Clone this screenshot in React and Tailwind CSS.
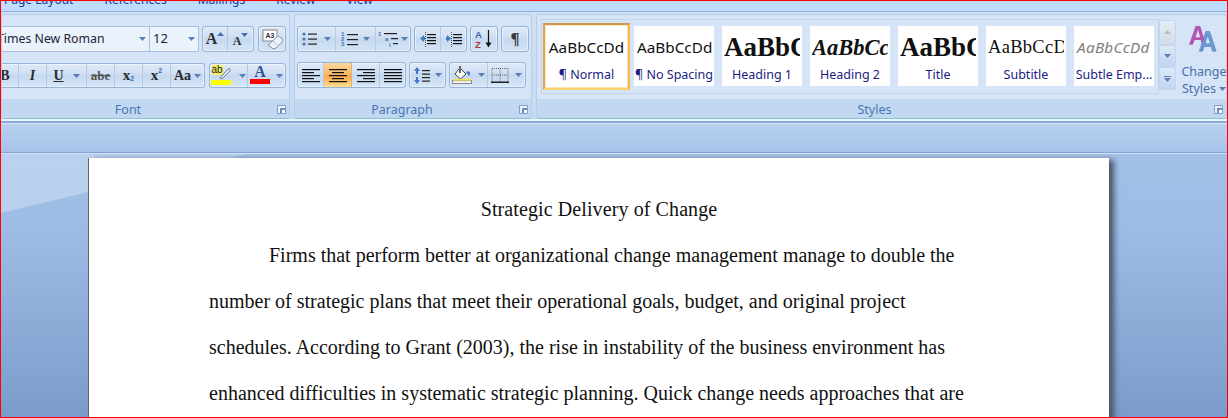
import React from "react";

const UI = "font-['Noto_Sans','Open_Sans',sans-serif]";
const groupBtn = "flex items-center justify-center border-r border-[#b4c9e3] last:border-r-0 h-full";

function Caret({ className = "ml-[5px]" }) {
  return (
    <svg width="7" height="4" viewBox="0 0 7 4" className={className}>
      <path d="M0 0h7L3.5 4z" fill="#5b7fb2" />
    </svg>
  );
}

function Group({ children, className = "" }) {
  return (
    <div className={`flex h-full rounded-[3px] border border-[#96b3d8] bg-[linear-gradient(180deg,#e0eaf7_0%,#cfdff3_42%,#c4d8ef_50%,#d6e5f6_100%)] shadow-[inset_0_0_0_1px_rgba(255,255,255,0.45)] overflow-hidden ${className}`}>
      {children}
    </div>
  );
}

function Launcher() {
  return (
    <svg width="9" height="9" viewBox="0 0 9 9">
      <path d="M.5.5h8v8h-8z" fill="#eef4fb" stroke="#7f9fc8" />
      <path d="M3 3h5v5H3z" fill="#6e8fbd" />
      <path d="M5 5h3v3H5z" fill="#fff" />
    </svg>
  );
}

function GroupPanel({ title, width, children, flexGrow, labelClass = "" }) {
  return (
    <div
      className={`flex flex-col h-[105px] rounded-[3px] border border-[#b7cde8] border-b-[#8cc0d4] bg-[#d5e4f6] overflow-hidden ${width} ${flexGrow ? "flex-1" : ""}`}
    >
      <div className="h-[84px] shrink-0">{children}</div>
      <div className={`relative flex-1 flex items-center justify-center pt-[4px] bg-[#c2d8f0] text-[12.5px] leading-none text-[#4a75b5] ${UI} ${labelClass}`}>
        {title}
        <span className="absolute right-[3px] top-[6px] flex"><Launcher /></span>
      </div>
    </div>
  );
}

function Lines({ align }) {
  const rows = {
    left: [[0, 18], [0, 12], [0, 18], [0, 12], [0, 18]],
    center: [[0, 18], [3, 12], [0, 18], [3, 12], [0, 18]],
    right: [[0, 18], [6, 12], [0, 18], [6, 12], [0, 18]],
    justify: [[0, 18], [0, 18], [0, 18], [0, 18], [0, 18]],
  }[align];
  return (
    <svg width="18" height="15" viewBox="0 0 18 15">
      {rows.map(([x, w], i) => (
        <rect key={i} x={x} y={i * 3 + 1} width={w} height="1.2" fill="#111" />
      ))}
    </svg>
  );
}

const Bullets = () => (
  <svg width="16" height="15" viewBox="0 0 16 15">
    {[2, 7, 12].map((y) => (
      <g key={y}>
        <circle cx="2" cy={y} r="1.6" fill="#4a76b8" />
        <rect x="6" y={y - 0.5} width="9" height="1.2" fill="#222" />
      </g>
    ))}
  </svg>
);

const Numbers = () => (
  <svg width="20" height="16" viewBox="0 0 20 16">
    {["1", "2", "3"].map((n, i) => (
      <g key={n}>
        <text x="0" y={5 + i * 5} fontSize="6" fontWeight="700" fill="#3d6cb0" fontFamily="Liberation Sans">{n}</text>
        <rect x="6" y={3 + i * 5} width="11" height="1.2" fill="#222" />
      </g>
    ))}
  </svg>
);

const Multi = () => (
  <svg width="22" height="17" viewBox="0 0 22 17">
    <text x="0" y="5" fontSize="6" fontWeight="700" fill="#3d6cb0" fontFamily="Liberation Sans">1</text>
    <rect x="6" y="2" width="13" height="1.2" fill="#222" />
    <text x="7" y="10" fontSize="6" fontWeight="700" fill="#3d6cb0" fontFamily="Liberation Sans">a</text>
    <rect x="13" y="7" width="7" height="1.2" fill="#222" />
    <text x="11" y="16" fontSize="6" fontWeight="700" fill="#3d6cb0" fontFamily="Liberation Sans">i</text>
    <rect x="15" y="12" width="5" height="1.2" fill="#222" />
  </svg>
);

const Indent = ({ dir }) => (
  <svg width="16" height="15" viewBox="0 0 16 15">
    <rect x="7" y="2" width="9" height="1.2" fill="#111" />
    <rect x="7" y="5" width="9" height="1.2" fill="#111" />
    <rect x="7" y="8" width="9" height="1.2" fill="#111" />
    <rect x="7" y="11" width="9" height="1.2" fill="#111" />
    <path d="M5.5 0v15" stroke="#555" strokeDasharray="1 1" />
    {dir === "l" ? (
      <path d="M0 6.5 4 3v2h1v3H4v2z" fill="#3f79cc" />
    ) : (
      <path d="M5 6.5 1 3v2H0v3h1v2z" fill="#3f79cc" />
    )}
  </svg>
);

const Sort = () => (
  <div className="relative flex items-center h-[19px] w-[19px]">
    <svg width="19" height="20" viewBox="0 0 19 20">
      <text x="0" y="8.5" fontSize="9.5" fontWeight="700" fill="#3b64ad" fontFamily="Liberation Sans">A</text>
      <text x="0" y="18.5" fontSize="9.5" fontWeight="700" fill="#a33d3d" fontFamily="Liberation Sans">Z</text>
      <path d="M13.5 1v14" stroke="#111" strokeWidth="1.2" />
      <path d="M10.5 13.5h6l-3 5z" fill="#111" />
    </svg>
  </div>
);

const LineSpacing = () => (
  <svg width="16" height="17" viewBox="0 0 16 17">
    <path d="M3 0 6 4H4v3H2V4H0z" fill="#3f79cc" />
    <path d="M3 17 0 13h2v-3h2v3h2z" fill="#3f79cc" />
    {[3, 6.5, 10, 13.5].map((y) => (
      <rect key={y} x="8" y={y} width="8" height="1.2" fill="#222" />
    ))}
  </svg>
);

const Shading = () => (
  <svg width="20" height="18" viewBox="0 0 20 18">
    <path d="M8 2 14 8 8.5 13 3 8z" fill="#fff" stroke="#444" />
    <path d="M7 0h2v7H7z" fill="#666" />
    <path d="M14 6c2-1 4-1 4 1s-.5 3-1 3-1-2-3-4z" fill="#3f79cc" />
    <rect x="0.5" y="14.5" width="19" height="3" fill="#eee" stroke="#8c8c8c" />
    <rect x="1" y="13" width="18" height="1.6" fill="#f3e34a" />
  </svg>
);

const BordersIcon = () => (
  <svg width="18" height="15" viewBox="0 0 18 15">
    <path d="M1 .5h16M1 7h16M1 .5v13M9 .5v13M17 .5v13" stroke="#666" strokeDasharray="1 1" fill="none" />
    <rect x="0" y="13.5" width="18" height="1.4" fill="#111" />
  </svg>
);

const Highlighter = () => (
  <div className="relative w-[19px] h-[19px]">
    <span className="absolute left-0 top-[-1px] w-[11px] h-[10px] bg-[#f6ee5d] text-[10px] leading-[10px] text-[#222] font-['Liberation_Sans']">ab</span>
    <svg width="19" height="19" viewBox="0 0 19 19" className="absolute left-0 top-0">
      <path d="M8 12 16 3c2-1 3 1 2 2l-8 8z" fill="#dfe7f1" stroke="#6f7e93" />
      <path d="M7 14h3l-2 1z" fill="#333" />
    </svg>
    <span className="absolute left-[-1px] top-[14px] w-[20px] h-[5px] bg-[#ffff00]" />
  </div>
);

const FontColor = () => (
  <div className="relative w-[20px] h-[20px] text-center">
    <span className="absolute inset-x-0 top-[-4px] font-['Liberation_Serif'] font-bold text-[16px] leading-[20px] text-[#2f5597]">A</span>
    <span className="absolute left-0 top-[13px] w-[20px] h-[5px] bg-[#ff0000]" />
  </div>
);

const Eraser = () => (
  <svg width="21" height="21" viewBox="0 0 21 21">
    <rect x="1" y="1" width="14" height="11" fill="#fff" stroke="#888" />
    <text x="3.5" y="9" fontSize="7" fontWeight="700" fill="#333" fontFamily="Liberation Sans">A3</text>
    <path d="M6 16 15 8c1-1 2-1 3 0l2 2c1 1 1 2 0 3l-6 6c-1 1-3 1-4 0z" fill="#eef3f8" stroke="#7d8ea6" />
    <path d="M10 11l5 5" stroke="#a9b9cd" />
  </svg>
);

const Grow = ({ big }) => (
  <span className="relative flex items-center justify-center font-['Liberation_Serif'] font-bold text-[#2f2f2f]">
    <span className={big ? "text-[16px] leading-none" : "text-[12px] leading-none mt-[3px]"}>A</span>
    <svg width="7" height="4" viewBox="0 0 7 4" className={big ? "mb-[10px]" : "mb-[9px]"}>
      <path d={big ? "M0 4h7L3.5 0z" : "M0 0h7L3.5 4z"} fill="#3f6eb5" />
    </svg>
  </span>
);

const Tb = ({ className = "", children }) => (
  <span className={`font-['Liberation_Serif'] text-[#2a2a2a] ${className}`}>{children}</span>
);

function StyleItem({ preview, label }) {
  return (
    <div className="flex flex-col items-center w-[80px] h-[60px] bg-white overflow-hidden shrink-0">
      <div className="h-[41px] w-[76px] pt-[2px] flex items-center overflow-hidden whitespace-nowrap">{preview}</div>
      <div className={`text-[12.5px] leading-[16px] text-[#1c1c80] whitespace-nowrap ${UI}`}>{label}</div>
    </div>
  );
}

function Spin({ className, children }) {
  return <div className={`flex items-center justify-center w-[17px] rounded-[2px] border border-[#c3d6ee] ${className}`}>{children}</div>;
}

const ChangeStyles = () => (
  <svg width="30" height="30" viewBox="0 0 32 30">
    <path d="M0 21 7 1h5l6 20h-4l-1.5-5H6l-2 5zM7 13h5L9.5 5z" fill="#b455b0" fillRule="evenodd" />
    <path d="M11 28 18 7h4l7 21h-4l-1.5-5H16l-1.5 5zM17 20h6l-3-9z" fill="#6b9ad8" fillRule="evenodd" stroke="#3f6eb5" strokeWidth="0.5" />
  </svg>
);

const docLines = [
  { t: "Firms that perform better at organizational change management manage to double the", c: "pl-[60px]" },
  { t: "number of strategic plans that meet their operational goals, budget, and original project", c: "" },
  { t: "schedules. According to Grant (2003), the rise in instability of the business environment has", c: "" },
  { t: "enhanced difficulties in systematic strategic planning. Quick change needs approaches that are", c: "" },
];

export default function App() {
  return (
    <div className={`relative w-[1228px] h-[418px] overflow-hidden border border-[#ff0000] flex flex-col bg-[#bfdbff] ${UI}`}>
      {/* tabs */}
      <div className="h-[10px] shrink-0 overflow-hidden bg-[#bfdbff]">
        <div className="flex mt-[-9px] pl-[3px] gap-[31px] text-[12px] leading-[16px] text-[#15428b]">
          <span>Page Layout</span>
          <span>References</span>
          <span>Mailings</span>
          <span>Review</span>
          <span>View</span>
        </div>
      </div>
      <div className="h-px bg-[#8db2e3] shrink-0" />

      {/* ribbon */}
      <div className="flex h-[107px] shrink-0 items-end gap-[4px] bg-[linear-gradient(180deg,#cfe0f6,#c4daf4)]">
        {/* Font */}
        <GroupPanel title="Font" width="w-[289px] shrink-0" labelClass="pr-[35px]">
          <div className="flex flex-col items-end pt-[11px] pr-[3px]">
            <div className="flex h-[26px] items-stretch">
              <div className="flex items-center justify-between w-[150px] border-y border-r border-[#a9c0de] bg-[#eaf2fb] text-[12.3px] text-[#22223a] pr-[3px] overflow-hidden">
                <span className="whitespace-nowrap ml-[-3px]">Times New Roman</span>
                <Caret className="" />
              </div>
              <div className="flex items-center justify-between w-[49px] border-y border-r border-[#a9c0de] bg-[#eaf2fb] text-[13px] text-[#22223a] pl-[3px] pr-[3px]">
                <span>12</span>
                <Caret className="" />
              </div>
              <Group className="w-[52px] ml-[3px]">
                <div className={`${groupBtn} w-[26px]`}><Grow big /></div>
                <div className={`${groupBtn} w-[26px]`}><Grow /></div>
              </Group>
              <Group className="w-[28px] ml-[4px]">
                <div className={`${groupBtn} w-full`}><Eraser /></div>
              </Group>
            </div>
            <div className="flex h-[25px] mt-[11px] items-stretch">
              <Group className="rounded-l-none border-l-0">
                <div className={`${groupBtn} w-[19px]`}><Tb className="font-bold text-[14px] ml-[-8px]">B</Tb></div>
                <div className={`${groupBtn} w-[28px]`}><Tb className="italic font-bold text-[14px]">I</Tb></div>
                <div className={`${groupBtn} w-[40px]`}><Tb className="font-bold underline text-[14px]">U</Tb><Caret className="ml-[9px]" /></div>
                <div className={`${groupBtn} w-[28px]`}><Tb className="font-bold line-through text-[13px] text-[#555]">abe</Tb></div>
                <div className={`${groupBtn} w-[28px]`}><Tb className="font-bold text-[15px] leading-none">x</Tb><span className="text-[7px] font-bold text-[#3f6eb5] mt-[8px] font-['Liberation_Sans']">2</span></div>
                <div className={`${groupBtn} w-[28px]`}><Tb className="font-bold text-[15px] leading-none">x</Tb><span className="text-[7px] font-bold text-[#3f6eb5] mb-[8px] font-['Liberation_Sans']">2</span></div>
                <div className={`${groupBtn} w-[33px]`}><Tb className="font-bold text-[14px]">Aa</Tb><Caret className="ml-[3px]" /></div>
              </Group>
              <Group className="ml-[4px]">
                <div className={`${groupBtn} w-[38px]`}><Highlighter /><Caret className="ml-[8px]" /></div>
                <div className={`${groupBtn} w-[37px]`}><FontColor /><Caret className="ml-[6px]" /></div>
              </Group>
            </div>
          </div>
        </GroupPanel>

        {/* Paragraph */}
        <GroupPanel title="Paragraph" width="w-[238px] shrink-0" labelClass="pr-[22px]">
          <div className="flex flex-col pt-[11px] pl-[2px] gap-[10px]">
            <div className="flex h-[26px] gap-[3px]">
              <Group>
                <div className={`${groupBtn} w-[38px]`}><Bullets /><Caret className="ml-[6px]" /></div>
                <div className={`${groupBtn} w-[40px]`}><Numbers /><Caret className="ml-[2px]" /></div>
                <div className={`${groupBtn} w-[34px]`}><Multi /><Caret className="ml-[1px]" /></div>
              </Group>
              <Group>
                <div className={`${groupBtn} w-[26px]`}><Indent dir="l" /></div>
                <div className={`${groupBtn} w-[25px]`}><Indent dir="r" /></div>
              </Group>
              <Group>
                <div className={`${groupBtn} w-[26px]`}><Sort /></div>
              </Group>
              <Group>
                <div className={`${groupBtn} w-[26px]`}><Tb className="font-bold text-[17px] text-[#3a3a3a]">¶</Tb></div>
              </Group>
            </div>
            <div className="flex h-[26px] gap-[3px]">
              <Group>
                <div className={`${groupBtn} w-[26px]`}><Lines align="left" /></div>
                <div className={`${groupBtn} w-[28px] border-r-[#d8b36c] bg-[linear-gradient(180deg,#fbd9a0_0%,#fbb764_45%,#fda94a_55%,#fde08e_100%)]`}><Lines align="center" /></div>
                <div className={`${groupBtn} w-[28px]`}><Lines align="right" /></div>
                <div className={`${groupBtn} w-[25px]`}><Lines align="justify" /></div>
              </Group>
              <Group>
                <div className={`${groupBtn} w-[35px]`}><LineSpacing /><Caret className="ml-[5px]" /></div>
              </Group>
              <Group>
                <div className={`${groupBtn} w-[38px]`}><Shading /><Caret className="ml-[6px]" /></div>
                <div className={`${groupBtn} w-[37px]`}><BordersIcon /><Caret className="ml-[6px]" /></div>
              </Group>
            </div>
          </div>
        </GroupPanel>

        {/* Styles */}
        <GroupPanel title="Styles" width="" flexGrow labelClass="pr-[14px]">
          <div className="flex h-full">
            <div className="flex mt-[4px] ml-[4px] h-[75px] w-[618px] border border-[#c2d5ed] items-start pl-[1px]">
              <div className="flex flex-col items-center w-[87px] h-[67px] mt-[3px] border-[2px] border-t-[#c9995a] border-l-[#dca45c] border-r-[#f6b64c] border-b-[#fbd36a] shadow-[inset_0_0_0_1px_#fde6b0] bg-white shrink-0 overflow-hidden">
                <div className="h-[40px] w-[78px] flex items-center justify-center whitespace-nowrap text-[15.3px] text-[#111] pt-[4px]">AaBbCcDd</div>
                <div className="text-[12.5px] leading-[16px] text-[#1c1c80] mt-[2px]">¶ Normal</div>
              </div>
              <div className="flex gap-[8px] ml-[4px] mt-[6px]">
                <StyleItem preview={<span className="text-[15.3px] text-[#111] ml-[1px]">AaBbCcDd</span>} label="¶ No Spacing" />
                <StyleItem preview={<span className="font-['Liberation_Serif'] font-bold text-[27px] text-[#111]">AaBbC</span>} label="Heading 1" />
                <StyleItem preview={<span className="font-['Liberation_Serif'] font-bold italic text-[22.5px] text-[#111]">AaBbCc</span>} label="Heading 2" />
                <StyleItem preview={<span className="font-['Liberation_Serif'] font-bold text-[27px] text-[#111]">AaBbC</span>} label="Title" />
                <StyleItem preview={<span className="font-['Liberation_Serif'] text-[18.5px] tracking-[0.3px] text-[#111]">AaBbCcD</span>} label="Subtitle" />
                <StyleItem preview={<span className="italic text-[15.3px] tracking-[0.3px] text-[#7f7f7f] ml-[1px]">AaBbCcDd</span>} label="Subtle Emp..." />
              </div>
            </div>
            <div className="flex flex-col w-[17px] mt-[5px] h-[70px] shrink-0">
              <Spin className="h-[25px] bg-[linear-gradient(180deg,#e5ecf4,#d3dce8)]"><svg width="7" height="4" viewBox="0 0 7 4"><path d="M0 4h7L3.5 0z" fill="#b3bbc6" /></svg></Spin>
              <Spin className="h-[23px] bg-[linear-gradient(180deg,#dde9f8,#bfd4ef)]"><Caret className="" /></Spin>
              <Spin className="h-[23px] bg-[linear-gradient(180deg,#dde9f8,#bfd4ef)]"><div className="flex flex-col items-center gap-px"><span className="w-[7px] h-px bg-[#5b7fb2]" /><Caret className="" /></div></Spin>
            </div>
            <div className="flex flex-col items-center w-[50px] pl-[6px] shrink-0 pt-[9px] text-[12.5px] leading-[17px] text-[#4a6ea9]">
              <ChangeStyles />
              <span className="mt-[9px]">Change</span>
              <span className="flex items-center">Styles<Caret className="ml-[3px]" /></span>
            </div>
          </div>
        </GroupPanel>
      </div>

      {/* strip below ribbon */}
      <div className="h-[2px] shrink-0 bg-[#e6f5fa]" />
      <div className="h-[2px] shrink-0 bg-[#88a9dc]" />
      <div className="h-[30px] shrink-0 border-t border-[#d7e5f7] border-b border-b-[#7fa3d6] bg-[linear-gradient(180deg,#b8d0ef,#a6c3e9)]" />
      <div className="h-px shrink-0 bg-[#d3e2f5]" />

      {/* document */}
      <div className="relative flex-1 overflow-hidden bg-[linear-gradient(180deg,#a3c0e7_0%,#9dbbe4_30%,#7b9ccb_100%)] pt-[4px]">
        <div className="absolute inset-0 bg-[linear-gradient(180deg,#bad1ef,#b0c9eb)] [clip-path:polygon(0_0,246px_0,0_59px)]" />
        <div className="relative ml-[88px] w-[1020px] h-[300px] bg-white shadow-[-1px_0_0_#666,5px_2px_6px_#4a5568] pt-[32px] font-['Liberation_Serif'] text-[20px] leading-[46px] text-[#111]">
          <div className="text-center leading-[38px] tracking-[0.1px]">Strategic Delivery of Change</div>
          <div className="pl-[120px] whitespace-nowrap mt-[4px]">
            {docLines.map((l) => (
              <div key={l.t} className={l.c}>{l.t}</div>
            ))}
          </div>
        </div>
      </div>
    </div>
  );
}
